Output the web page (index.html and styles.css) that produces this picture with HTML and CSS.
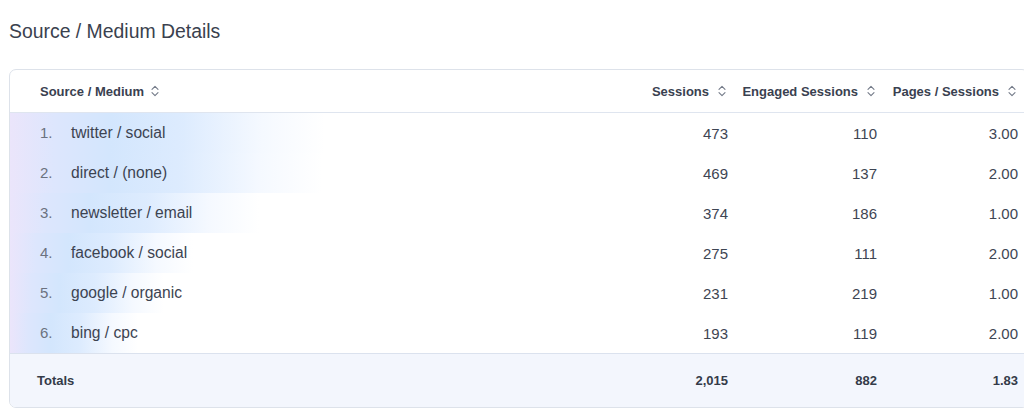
FILE: index.html
```html
<!DOCTYPE html>
<html lang="en">
<head>
<meta charset="utf-8">
<title>Source / Medium Details</title>
<link rel="stylesheet" href="styles.css">
</head>
<body>
<div class="page">
  <h1 class="title">Source / Medium Details</h1>
  <div class="card">
    <table class="report">
      <colgroup>
        <col class="c-source"><col class="c-sessions"><col class="c-engaged"><col class="c-pages">
      </colgroup>
      <thead>
        <tr>
          <th class="th-source"><span class="th-inner">Source / Medium <svg class="sort" viewBox="0 0 12 12"><path d="M3 4.4 6 1.4 9 4.4M3 7.6 6 10.6 9 7.6"/></svg></span></th>
          <th class="num"><span class="th-inner">Sessions <svg class="sort" viewBox="0 0 12 12"><path d="M3 4.4 6 1.4 9 4.4M3 7.6 6 10.6 9 7.6"/></svg></span></th>
          <th class="num"><span class="th-inner">Engaged Sessions <svg class="sort" viewBox="0 0 12 12"><path d="M3 4.4 6 1.4 9 4.4M3 7.6 6 10.6 9 7.6"/></svg></span></th>
          <th class="num"><span class="th-inner">Pages / Sessions <svg class="sort" viewBox="0 0 12 12"><path d="M3 4.4 6 1.4 9 4.4M3 7.6 6 10.6 9 7.6"/></svg></span></th>
        </tr>
      </thead>
      <tbody>
        <tr>
          <td class="src" style="background-size: 315px 100%"><span class="idx">1.</span><span class="label">twitter / social</span></td>
          <td class="num">473</td><td class="num">110</td><td class="num">3.00</td>
        </tr>
        <tr>
          <td class="src" style="background-size: 312px 100%"><span class="idx">2.</span><span class="label">direct / (none)</span></td>
          <td class="num">469</td><td class="num">137</td><td class="num">2.00</td>
        </tr>
        <tr>
          <td class="src" style="background-size: 249px 100%"><span class="idx">3.</span><span class="label">newsletter / email</span></td>
          <td class="num">374</td><td class="num">186</td><td class="num">1.00</td>
        </tr>
        <tr>
          <td class="src" style="background-size: 183px 100%"><span class="idx">4.</span><span class="label">facebook / social</span></td>
          <td class="num">275</td><td class="num">111</td><td class="num">2.00</td>
        </tr>
        <tr>
          <td class="src" style="background-size: 154px 100%"><span class="idx">5.</span><span class="label">google / organic</span></td>
          <td class="num">231</td><td class="num">219</td><td class="num">1.00</td>
        </tr>
        <tr>
          <td class="src" style="background-size: 128px 100%"><span class="idx">6.</span><span class="label">bing / cpc</span></td>
          <td class="num">193</td><td class="num">119</td><td class="num">2.00</td>
        </tr>
      </tbody>
      <tfoot>
        <tr>
          <td class="tot-label">Totals</td>
          <td class="num">2,015</td><td class="num">882</td><td class="num">1.83</td>
        </tr>
      </tfoot>
    </table>
  </div>
</div>
</body>
</html>
```

FILE: styles.css
```css
html, body {
  margin: 0;
  padding: 0;
  background: #ffffff;
  overflow: hidden;
}

body {
  font-family: "Liberation Sans", Arial, Helvetica, sans-serif;
  color: #3b4250;
}

.page {
  padding: 19px 0 0 9px;
}

.title {
  margin: 0 0 26px 0;
  font-size: 19.4px;
  line-height: 24px;
  font-weight: 400;
  color: #3a414e;
}

.card {
  width: 1020px;
  box-sizing: border-box;
  border: 1px solid #dde2ea;
  border-radius: 7px;
  overflow: hidden;
  background: #ffffff;
}

.report {
  width: 1018px;
  table-layout: fixed;
  border-collapse: collapse;
}

.c-source { width: 628px; }
.c-sessions { width: 100px; }
.c-engaged { width: 149px; }
.c-pages { width: 141px; }

.report th {
  height: 42px;
  padding: 0 10px 0 0;
  font-size: 13px;
  font-weight: 700;
  color: #3a4150;
  border-bottom: 1px solid #dfe5ef;
  white-space: nowrap;
}

.th-source {
  text-align: left;
  padding-left: 30px !important;
}

.th-inner {
  display: inline-flex;
  align-items: center;
  gap: 5px;
}

.num .th-inner {
  gap: 7px;
}

.sort {
  width: 12px;
  height: 12px;
  fill: none;
  stroke: #737a88;
  stroke-width: 1.1;
  stroke-linecap: round;
  stroke-linejoin: round;
}

.report th.num,
.report td.num {
  text-align: right;
}

.report tbody td {
  height: 40px;
  padding: 0 10px 0 0;
  font-size: 15px;
  color: #3e4553;
  white-space: nowrap;
}

.report tbody td.src {
  padding-left: 30px;
  background-image: linear-gradient(90deg, #ebe5fb 0%, #dde6fd 14%, #d3e6fd 32%, rgba(215, 232, 254, 0.85) 55%, rgba(235, 243, 255, 0.5) 80%, rgba(255, 255, 255, 0) 100%);
  background-repeat: no-repeat;
  background-position: 0 0;
}

.idx {
  display: inline-block;
  width: 31px;
  color: #6b7280;
}

.label {
  font-size: 15.6px;
  color: #3c4351;
}

.report tfoot td {
  height: 53px;
  padding: 0 10px 0 0;
  background: #f3f6fd;
  border-top: 1px solid #dbe2ee;
  font-size: 13px;
  font-weight: 700;
  color: #343b49;
}

.report tfoot td.tot-label {
  padding-left: 27px;
}
```
